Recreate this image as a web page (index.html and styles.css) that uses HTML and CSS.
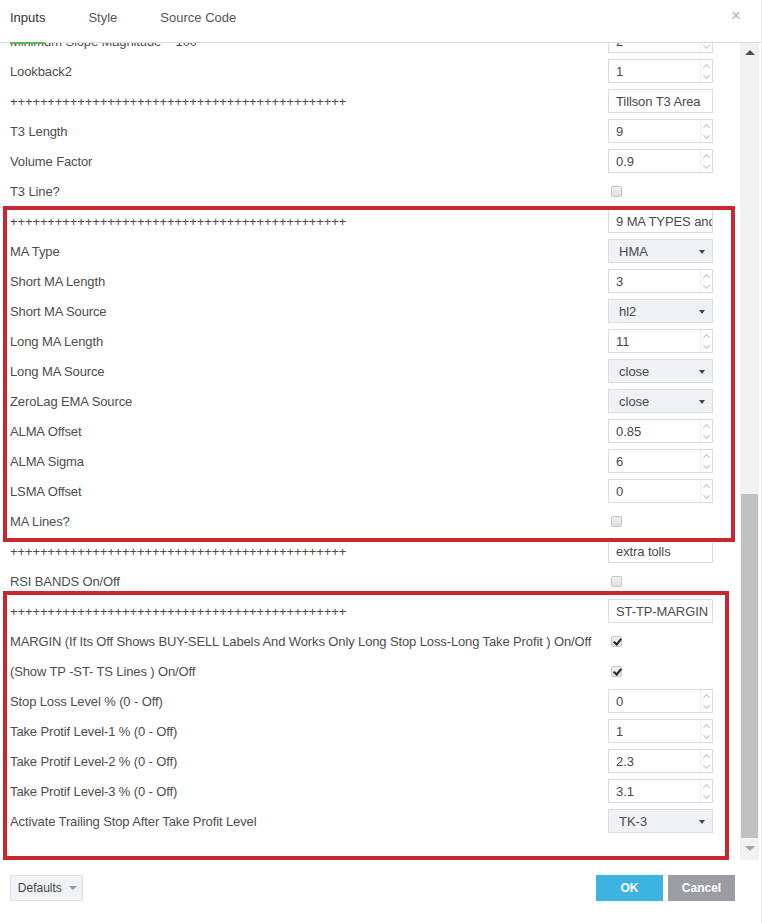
FILE: index.html
```html
<!DOCTYPE html>
<html lang="en">
<head>
    <meta charset="UTF-8">
    <title>Indicator Inputs</title>
    <link rel="stylesheet" href="styles.css">
</head>
<body>
    <div class="dialog">
        <header class="tabs">
            <a class="tab active">Inputs</a>
            <a class="tab">Style</a>
            <a class="tab">Source Code</a>
            <span class="close">&#215;</span>
        </header>

        <div class="body">
            <div class="content">
                <div class="rows">
                    <div class="row"><span class="label">Minimum Slope Magnitude ~ 100</span><div class="num"><span class="val">2</span><span class="spin"><i class="up"></i><i class="down"></i></span></div></div>
                    <div class="row"><span class="label">Lookback2</span><div class="num"><span class="val">1</span><span class="spin"><i class="up"></i><i class="down"></i></span></div></div>
                    <div class="row"><span class="label">+++++++++++++++++++++++++++++++++++++++++++++</span><div class="text">Tillson T3 Area</div></div>
                    <div class="row"><span class="label">T3 Length</span><div class="num"><span class="val">9</span><span class="spin"><i class="up"></i><i class="down"></i></span></div></div>
                    <div class="row"><span class="label">Volume Factor</span><div class="num"><span class="val">0.9</span><span class="spin"><i class="up"></i><i class="down"></i></span></div></div>
                    <div class="row"><span class="label">T3 Line?</span><div class="cell"><span class="check"></span></div></div>
                    <div class="row"><span class="label">+++++++++++++++++++++++++++++++++++++++++++++</span><div class="text">9 MA TYPES and</div></div>
                    <div class="row"><span class="label">MA Type</span><div class="select">HMA</div></div>
                    <div class="row"><span class="label">Short MA Length</span><div class="num"><span class="val">3</span><span class="spin"><i class="up"></i><i class="down"></i></span></div></div>
                    <div class="row"><span class="label">Short MA Source</span><div class="select">hl2</div></div>
                    <div class="row"><span class="label">Long MA Length</span><div class="num"><span class="val">11</span><span class="spin"><i class="up"></i><i class="down"></i></span></div></div>
                    <div class="row"><span class="label">Long MA Source</span><div class="select">close</div></div>
                    <div class="row"><span class="label">ZeroLag EMA Source</span><div class="select">close</div></div>
                    <div class="row"><span class="label">ALMA Offset</span><div class="num"><span class="val">0.85</span><span class="spin"><i class="up"></i><i class="down"></i></span></div></div>
                    <div class="row"><span class="label">ALMA Sigma</span><div class="num"><span class="val">6</span><span class="spin"><i class="up"></i><i class="down"></i></span></div></div>
                    <div class="row"><span class="label">LSMA Offset</span><div class="num"><span class="val">0</span><span class="spin"><i class="up"></i><i class="down"></i></span></div></div>
                    <div class="row"><span class="label">MA Lines?</span><div class="cell"><span class="check"></span></div></div>
                    <div class="row"><span class="label">+++++++++++++++++++++++++++++++++++++++++++++</span><div class="text">extra tolls</div></div>
                    <div class="row"><span class="label">RSI BANDS On/Off</span><div class="cell"><span class="check"></span></div></div>
                    <div class="row"><span class="label">+++++++++++++++++++++++++++++++++++++++++++++</span><div class="text">ST-TP-MARGIN</div></div>
                    <div class="row"><span class="label">MARGIN (If Its Off Shows BUY-SELL Labels And Works Only Long Stop Loss-Long Take Profit ) On/Off</span><div class="cell"><span class="check on"></span></div></div>
                    <div class="row"><span class="label">(Show TP -ST- TS Lines ) On/Off</span><div class="cell"><span class="check on"></span></div></div>
                    <div class="row"><span class="label">Stop Loss Level % (0 - Off)</span><div class="num"><span class="val">0</span><span class="spin"><i class="up"></i><i class="down"></i></span></div></div>
                    <div class="row"><span class="label">Take Protif Level-1 % (0 - Off)</span><div class="num"><span class="val">1</span><span class="spin"><i class="up"></i><i class="down"></i></span></div></div>
                    <div class="row"><span class="label">Take Protif Level-2 % (0 - Off)</span><div class="num"><span class="val">2.3</span><span class="spin"><i class="up"></i><i class="down"></i></span></div></div>
                    <div class="row"><span class="label">Take Protif Level-3 % (0 - Off)</span><div class="num"><span class="val">3.1</span><span class="spin"><i class="up"></i><i class="down"></i></span></div></div>
                    <div class="row"><span class="label">Activate Trailing Stop After Take Profit Level</span><div class="select">TK-3</div></div>
                </div>
            </div>

            <div class="scrollbar">
                <span class="arrow-up"></span>
                <div class="track"><div class="thumb"></div></div>
                <span class="arrow-down"></span>
            </div>

            <!-- red annotation frames drawn over the list -->
            <div class="mark mark-ma"></div>
            <div class="mark mark-tp"></div>
        </div>

        <footer class="footer">
            <button class="btn-defaults">Defaults <span class="caret"></span></button>
            <div class="actions">
                <button class="btn-ok">OK</button>
                <button class="btn-cancel">Cancel</button>
            </div>
        </footer>
    </div>
</body>
</html>
```

FILE: styles.css
```css
* {
    margin: 0;
    padding: 0;
    box-sizing: border-box;
}

body {
    font-family: 'Liberation Sans', Arial, sans-serif;
    font-size: 13px;
    color: #4d4d4d;
    background: #fff;
}

.dialog {
    width: 762px;
    height: 923px;
    display: flex;
    flex-direction: column;
    border-right: 1px solid #e6e6e6;
}

/* tabs header */
.tabs {
    height: 43px;
    display: flex;
    align-items: stretch;
    padding-left: 10px;
    border-bottom: 1px solid #dcdcdc;
    position: relative;
    z-index: 2;
    background: #fff;
}

.tab {
    display: flex;
    align-items: center;
    margin-right: 43px;
    padding-bottom: 8px;
    color: #555;
    font-size: 13px;
    border-bottom: 2px solid transparent;
    margin-bottom: -2px;
}

.tab.active {
    color: #333;
    border-bottom-color: #5cb85c;
}

.close {
    margin-left: auto;
    margin-right: 20px;
    margin-top: 6px;
    color: #b5b5b5;
    font-size: 17px;
}

/* body with scrolled list */
.body {
    flex: 1;
    display: flex;
    overflow: hidden;
    position: relative;
}

.content {
    flex: 1;
    overflow: hidden;
    padding: 0 27px 0 10px;
}

.rows {
    margin-top: -17px;
}

.row {
    height: 30px;
    display: flex;
    align-items: center;
    justify-content: space-between;
}

.label {
    white-space: nowrap;
    letter-spacing: -0.12px;
}

.num, .text, .select, .cell {
    width: 105px;
    height: 24px;
    flex-shrink: 0;
}

.num, .text {
    border: 1px solid #dadada;
    background: #fff;
    display: flex;
    align-items: center;
    color: #4a4a4a;
    font-size: 13px;
}

.text {
    padding-left: 7px;
    white-space: nowrap;
    overflow: hidden;
    letter-spacing: -0.1px;
}

.num .val {
    flex: 1;
    padding-left: 7px;
}

.spin {
    width: 12px;
    height: 100%;
    border-left: 1px solid #efefef;
    display: flex;
    flex-direction: column;
}

.spin i {
    flex: 1;
    position: relative;
}

.spin i::after {
    content: "";
    position: absolute;
    left: 3px;
    width: 4px;
    height: 4px;
    border-left: 1px solid #c3c3c3;
    border-top: 1px solid #c3c3c3;
}

.spin .up::after {
    top: 5px;
    transform: rotate(45deg);
}

.spin .down::after {
    top: 2px;
    transform: rotate(225deg);
}

.select {
    border: 1px solid #dadde2;
    background: #eff1f4;
    display: flex;
    align-items: center;
    padding-left: 10px;
    color: #4a4a4a;
    font-size: 13px;
    position: relative;
}

.select::after {
    content: "";
    position: absolute;
    right: 7px;
    top: 10px;
    border-left: 3px solid transparent;
    border-right: 3px solid transparent;
    border-top: 4px solid #444;
}

.cell {
    display: flex;
    align-items: center;
    padding-left: 3px;
}

.check {
    width: 11px;
    height: 11px;
    border: 1px solid #c8c8c8;
    border-radius: 2px;
    background: linear-gradient(#f1f1f1, #dedede);
    position: relative;
}

.check.on::after {
    content: "";
    position: absolute;
    left: 3px;
    top: 0;
    width: 3px;
    height: 6px;
    border-right: 2px solid #222;
    border-bottom: 2px solid #222;
    transform: rotate(40deg);
}

/* custom scrollbar */
.scrollbar {
    width: 19px;
    margin-right: 2px;
    background: #f1f1f1;
    display: flex;
    flex-direction: column;
    align-items: center;
    padding-bottom: 3px;
}

.arrow-up, .arrow-down {
    height: 17px;
    display: flex;
    align-items: center;
}

.arrow-up::after {
    content: "";
    border-left: 5px solid transparent;
    border-right: 5px solid transparent;
    border-bottom: 5px solid #505050;
    margin-top: 2px;
}

.arrow-down::after {
    content: "";
    border-left: 5px solid transparent;
    border-right: 5px solid transparent;
    border-top: 5px solid #a3a3a3;
}

.track {
    flex: 1;
    width: 100%;
    display: flex;
    flex-direction: column;
    justify-content: flex-end;
    padding: 0 1px 2px;
}

.thumb {
    height: 344px;
    background: #c1c1c1;
}

/* annotation frames */
.mark {
    position: absolute;
    border: 4px solid #c9262e;
    pointer-events: none;
}

.mark-ma {
    left: 3px;
    top: 163px;
    width: 732px;
    height: 336px;
}

.mark-tp {
    left: 3px;
    top: 548px;
    width: 726px;
    height: 269px;
}

/* footer buttons */
.footer {
    height: 63px;
    display: flex;
    justify-content: space-between;
    align-items: flex-start;
    padding: 15px 26px 0 10px;
}

button {
    height: 26px;
    border: none;
    font-family: 'Liberation Sans', Arial, sans-serif;
    font-size: 12px;
    cursor: pointer;
}

.btn-defaults {
    width: 73px;
    background: #f0f2f5;
    border: 1px solid #dcdfe3;
    color: #444;
    padding-left: 2px;
}

.caret {
    display: inline-block;
    margin-left: 4px;
    vertical-align: 2px;
    border-left: 4px solid transparent;
    border-right: 4px solid transparent;
    border-top: 4px solid #999;
}

.actions {
    display: flex;
    gap: 5px;
}

.btn-ok, .btn-cancel {
    width: 67px;
    color: #fff;
    font-weight: bold;
}

.btn-ok {
    background: #3db3e3;
}

.btn-cancel {
    background: #9b9da3;
}
```
